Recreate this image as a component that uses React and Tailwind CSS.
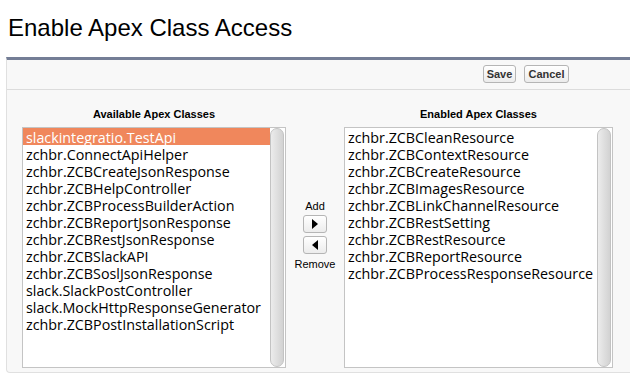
import React from "react";

const available = [
  "slackintegratio.TestApi",
  "zchbr.ConnectApiHelper",
  "zchbr.ZCBCreateJsonResponse",
  "zchbr.ZCBHelpController",
  "zchbr.ZCBProcessBuilderAction",
  "zchbr.ZCBReportJsonResponse",
  "zchbr.ZCBRestJsonResponse",
  "zchbr.ZCBSlackAPI",
  "zchbr.ZCBSoslJsonResponse",
  "slack.SlackPostController",
  "slack.MockHttpResponseGenerator",
  "zchbr.ZCBPostInstallationScript",
];

const enabled = [
  "zchbr.ZCBCleanResource",
  "zchbr.ZCBContextResource",
  "zchbr.ZCBCreateResource",
  "zchbr.ZCBImagesResource",
  "zchbr.ZCBLinkChannelResource",
  "zchbr.ZCBRestSetting",
  "zchbr.ZCBRestResource",
  "zchbr.ZCBReportResource",
  "zchbr.ZCBProcessResponseResource",
];

function ListBox({ items, selected, width }) {
  return (
    <div
      className="flex h-[241px] border border-[#c4c4c4] bg-white"
      style={{ width }}
    >
      <div className="flex-1 min-w-0 font-['Open_Sans',sans-serif] text-[14.3px] leading-[17px] text-black">
        {items.map((it, i) => (
          <div
            key={it}
            className={
              i === selected
                ? "h-[17px] pl-[3px] pt-[1px] whitespace-nowrap bg-[#f0875c] text-white"
                : "h-[17px] pl-[3px] pt-[1px] whitespace-nowrap"
            }
          >
            {it}
          </div>
        ))}
      </div>
      <div className="w-[15px] shrink-0 pr-[1px]">
        <div className="h-full w-[14px] rounded-full border border-[#c3c3c3] bg-gradient-to-r from-[#ececec] to-[#d2d2d2]" />
      </div>
    </div>
  );
}

function Btn({ children, w }) {
  return (
    <button
      className={`h-[18px] ${w} rounded-[3px] border border-[#b5b5b5] bg-gradient-to-b from-[#ffffff] to-[#ececec] font-['Liberation_Sans',Arial,sans-serif] text-[11px] font-bold leading-[16px] text-[#333]`}
    >
      {children}
    </button>
  );
}

function ArrowBtn({ dir }) {
  return (
    <button className="flex h-[18px] w-[24px] items-center justify-center rounded-[3px] border border-[#b5b5b5] bg-gradient-to-b from-[#ffffff] to-[#ececec]">
      <svg width="6" height="10" viewBox="0 0 6 10">
        {dir === "right" ? (
          <polygon points="0,0 6,5 0,10" fill="#000" />
        ) : (
          <polygon points="6,0 0,5 6,10" fill="#000" />
        )}
      </svg>
    </button>
  );
}

export default function App() {
  return (
    <div className="min-h-[373px] bg-white pl-[6px] font-['Liberation_Sans',Arial,sans-serif]">
      <h1 className="ml-[2px] pt-[14px] text-[24px] leading-[28px] font-normal text-black">
        Enable Apex Class Access
      </h1>
      <div className="mt-[15px] h-[316px] rounded-bl-[4px] border-t-[3px] border-l border-b border-t-[#747e96] border-l-[#e0e0e0] border-b-[#e0e0e0] bg-[#f8f8f8]">
        <div className="flex h-[30px] items-start gap-[8px] border-b border-[#dcdcdc] pl-[476px] pt-[5px]">
          <Btn w="w-[33px]">Save</Btn>
          <Btn w="w-[45px]">Cancel</Btn>
        </div>
        <div className="flex pl-[15px] pt-[18px]">
          <div className="flex w-[264px] flex-col items-center">
            <div className="h-[13px] text-[11px] font-bold leading-[13px] text-black">
              Available Apex Classes
            </div>
            <div className="mt-[6px]">
              <ListBox items={available} selected={0} width={264} />
            </div>
          </div>
          <div className="flex w-[58px] flex-col items-center pt-[92px]">
            <div className="text-[11px] leading-[13px] text-black">Add</div>
            <div className="mt-[2px]">
              <ArrowBtn dir="right" />
            </div>
            <div className="mt-[3px]">
              <ArrowBtn dir="left" />
            </div>
            <div className="mt-[4px] text-[11px] leading-[13px] text-black">
              Remove
            </div>
          </div>
          <div className="flex w-[269px] flex-col items-center">
            <div className="h-[13px] text-[11px] font-bold leading-[13px] text-black">
              Enabled Apex Classes
            </div>
            <div className="mt-[6px]">
              <ListBox items={enabled} selected={-1} width={269} />
            </div>
          </div>
        </div>
      </div>
    </div>
  );
}
